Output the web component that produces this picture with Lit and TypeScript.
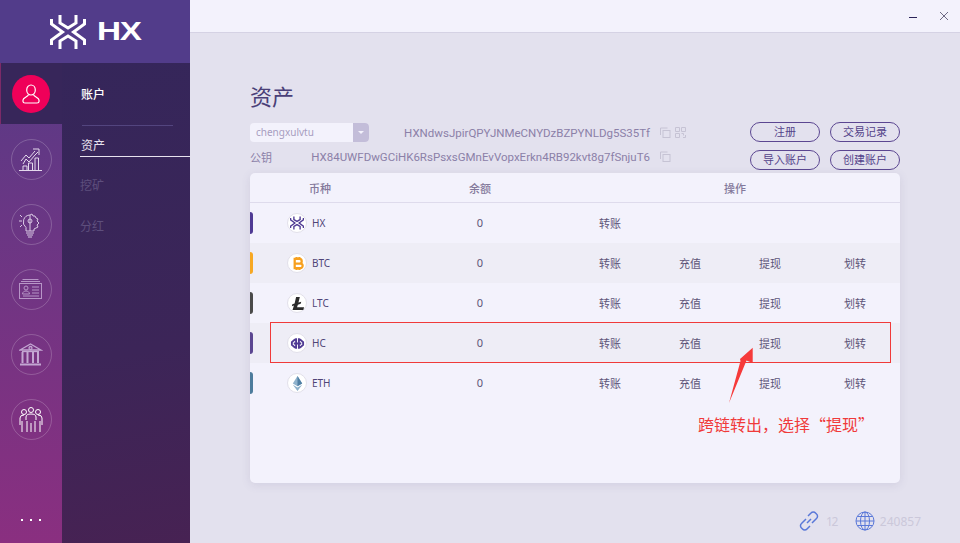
import { LitElement, html, css, svg } from "lit";
import { customElement } from "lit/decorators.js";

const logoMark = (color: string, w: number) => svg`
  <g fill="none" stroke=${color} stroke-width=${w} stroke-linejoin="miter">
    <path d="M10 1v8l8 5 8-5V1"/>
    <path d="M10 35v-8l8-5 8 5v8"/>
    <path d="M1.500 5v5l11 8-11 8v5"/>
    <path d="M34.500 5v5l-11 8 11 8v5"/>
  </g>`;

const coins = [
  { name: "HX", bar: "#4f3a94", all: false },
  { name: "BTC", bar: "#f7a823", all: true },
  { name: "LTC", bar: "#4a4a4a", all: true },
  { name: "HC", bar: "#5b4691", all: true },
  { name: "ETH", bar: "#4d7c9c", all: true },
];

const coinIcon = (name: string) => {
  if (name === "HX")
    return svg`<svg viewBox="0 0 36 36" width="14" height="14">${logoMark("#4f3a94", 3.5)}</svg>`;
  if (name === "BTC")
    return svg`<svg viewBox="0 0 16 16" width="15" height="15"><path fill="none" stroke="#f7a01e" stroke-width="2.400" d="M5 3h5a2.400 2.400 0 0 1 0 5H5h6a2.500 2.500 0 0 1 0 5H5zM7 1v2M10 1v2M7 13v2M10 13v2"/></svg>`;
  if (name === "LTC")
    return svg`<svg viewBox="0 0 16 16" width="15" height="15"><path fill="#2b2b2b" d="M6.500 1h4L9 7l3-1-.6 2.200-3 1L7.500 12H15l-.8 3H2.700l1.500-5L2 10.800l.5-2 2.400-.8z"/></svg>`;
  if (name === "HC")
    return svg`<svg viewBox="0 0 16 16" width="15" height="15"><g fill="none" stroke="#4f3a94" stroke-width="2"><path d="M6 4H5L2 6.500v3L5 12h1M10 4h1l3 2.500v3L11 12h-1M6.500 2.500v11M9.500 2.500v11M4 8h8"/></g></svg>`;
  return svg`<svg viewBox="0 0 16 16" width="15" height="15"><path fill="#8fb2cc" d="M8 0l5 8-5 3-5-3z"/><path fill="#4f7fa3" d="M8 0v11l5-3z"/><path fill="#8fb2cc" d="M3 9.300l5 3 5-3-5 6.700z"/></svg>`;
};

const navIcons = [
  svg`<g fill="none" stroke="#e4d9ec" stroke-width="1"><path d="M2 14l5-6 3 3 6-7"/><path d="M4 17l3-5 3 3 6-7 3-3"/><path d="M14 2h6v6"/><path d="M0 23.500h23M4 23v-4h4v4M9.500 23v-7h4v7M16 23V11h3.500v12"/></g>`,
  svg`<g fill="none" stroke="#d9c9e3" stroke-width="1"><path d="M11 3a7 7 0 0 0-4 12.500V19h8"/><path d="M11 3v16M11 3l2-1 1 2 2 0 1 2 2 1-1 2 2 2-2 2 1 2-2 1-2 1v2"/><circle cx="11" cy="9" r="2"/><path d="M7 21h8M8 23h6M9 25h4M0 9h3M1 3l2 2M1 15l2-2"/></g>`,
  svg`<g fill="none" stroke="#b795c7" stroke-width="1"><rect x="0.500" y="6.500" width="22" height="15"/><path d="M2 4.500h19M3.500 2.500h16"/><circle cx="7" cy="11" r="2"/><path d="M3.500 17c0-4 7-4 7 0zM13 10h7M13 13h7M13 16h7M4 19h16"/></g>`,
  svg`<g fill="none" stroke="#c3a6d2" stroke-width="1.300"><path d="M1 8l10.500-6L22 8z"/><circle cx="11.500" cy="6" r="1.500"/><path d="M3 9.500h17"/><path stroke-width="2" d="M3.500 10v11M8.500 10v11M14 10v11M19 10v11"/><path stroke-width="2" d="M1 22.500h21"/></g>`,
  svg`<g fill="none" stroke="#fff" stroke-width="1"><circle cx="5" cy="5" r="2.500"/><circle cx="12" cy="3" r="2.500"/><circle cx="19" cy="5" r="2.500"/><path d="M1 18V11q0-3 4-3M23 18V11q0-3-4-3M7 13V10q0-3 5-3t5 3v3M8 25V14M16 25V14M12 25V16M3 14v11M21 14v11"/></g>`,
];

@customElement("app-root")
export class AppRoot extends LitElement {
  static styles = css`
    :host {
      display: flex;
      width: 960px;
      height: 543px;
      overflow: hidden;
      position: relative;
      background: #e3e1ee;
      font-family: "Noto Sans", "Noto Sans CJK SC", sans-serif;
      font-size: 11px;
      color: #453b66;
    }
    .side {
      width: 190px;
      flex: none;
      display: flex;
      flex-direction: column;
    }
    .brand {
      height: 63px;
      flex: none;
      background: #523c8a;
      display: flex;
      align-items: center;
      padding-left: 50px;
      gap: 11px;
      box-sizing: border-box;
    }
    .brand-name {
      color: #fff;
      font-family: "Liberation Sans", sans-serif;
      font-weight: 700;
      font-size: 25px;
      width: 44px;
      display: inline-block;
      transform: scaleX(1.33);
      transform-origin: left center;
      white-space: nowrap;
      letter-spacing: -1px;
    }
    .side-body {
      flex: 1;
      display: flex;
    }
    .rail {
      width: 62px;
      flex: none;
      background: linear-gradient(180deg, #5a3a86 0%, #8a2f80 100%);
      display: flex;
      flex-direction: column;
      align-items: center;
      position: relative;
    }
    .rail-active {
      align-self: stretch;
      height: 61px;
      background: #37265a;
      box-shadow: inset 1px 0 0 #7c2a68;
      display: flex;
      align-items: center;
      justify-content: center;
      margin-bottom: 15px;
    }
    .avatar {
      width: 38px;
      height: 38px;
      border-radius: 50%;
      background: #ef0059;
      display: flex;
      align-items: center;
      justify-content: center;
    }
    .nav-circle {
      width: 41px;
      height: 41px;
      border: 1px solid rgba(255, 255, 255, 0.2);
      border-radius: 50%;
      box-sizing: border-box;
      display: flex;
      align-items: center;
      justify-content: center;
      margin-bottom: 24px;
    }
    .more {
      position: absolute;
      bottom: 22px;
      left: 21px;
      display: flex;
      gap: 7px;
    }
    .more i {
      width: 2px;
      height: 2px;
      background: #fff;
    }
    .subnav {
      flex: 1;
      background: linear-gradient(170deg, #35265a 0%, #3c2558 60%, #472253 100%);
      padding-top: 22px;
      box-sizing: border-box;
      padding-left: 18px;
      font-size: 12px;
    }
    .subnav-title {
      color: #fff;
      font-weight: 500;
      line-height: 20px;
      padding-left: 1px;
    }
    .subnav-rule {
      width: 91px;
      height: 1px;
      background: #53457f;
      margin: 20px 0 0 2px;
    }
    .subnav-item {
      color: #5e4f7d;
      line-height: 18px;
      margin-top: 23px;
    }
    .subnav-item.on {
      color: #e7e2ee;
      margin-top: 11px;
      padding: 0 0 1px 1px;
      border-bottom: 1px solid #e7e2ee;
    }
    .subnav-item.on + .subnav-item {
      margin-top: 20px;
    }
    main {
      flex: 1;
      display: flex;
      flex-direction: column;
      min-width: 0;
    }
    .titlebar {
      height: 33px;
      flex: none;
      box-sizing: border-box;
      background: #f3f2fc;
      border-bottom: 1px solid #d5d2e4;
      display: flex;
      justify-content: flex-end;
      align-items: center;
      gap: 21px;
      padding-right: 11px;
    }
    .content {
      flex: 1;
      padding: 48px 60px 0;
      display: flex;
      flex-direction: column;
    }
    h1 {
      margin: 0;
      font-weight: 400;
      font-size: 22px;
      line-height: 30px;
      color: #4a3f78;
    }
    .acct {
      display: flex;
      justify-content: space-between;
      margin-top: 11px;
      height: 50px;
    }
    .acct-left {
      display: flex;
      flex-direction: column;
      gap: 5px;
      padding-top: 1px;
    }
    .acct-line {
      display: flex;
      align-items: center;
      height: 19px;
      color: #8b80a8;
      width: 437px;
    }
    .acct-line .addr {
      flex: 1;
      text-align: right;
      font-family: Roboto, "Noto Sans", sans-serif;
      font-size: 11.5px;
    }
    .pub-label {
      color: #8b80a8;
    }
    .select {
      width: 119px;
      height: 19px;
      display: flex;
      border-radius: 4px;
      background: #f3f2fc;
      overflow: hidden;
      color: #a79dbf;
      line-height: 19px;
      font-size: 10px;
      flex: none;
    }
    .select span {
      flex: 1;
      padding-left: 6px;
    }
    .select b {
      width: 16px;
      background: #c3bdd9;
      display: flex;
      align-items: center;
      justify-content: center;
    }
    .select b::after {
      content: "";
      border: 3px solid transparent;
      border-top-color: #f3f2fc;
      border-bottom: 0;
    }
    .tool-icons {
      display: flex;
      gap: 4px;
      width: 27px;
      margin-left: 10px;
      flex: none;
    }
    .btns {
      display: grid;
      grid-template-columns: 70px 70px;
      gap: 5px 10px;
    }
    .btn {
      height: 20px;
      box-sizing: border-box;
      border: 1px solid #5b4691;
      border-radius: 10px;
      color: #54438a;
      text-align: center;
      line-height: 18px;
    }
    .table {
      margin-top: 1px;
      height: 310px;
      flex: none;
      border-radius: 5px;
      background: #f3f2fc;
      box-shadow: 0 2px 10px rgba(90, 80, 130, 0.12);
      overflow: hidden;
    }
    .row {
      display: grid;
      grid-template-columns: 190px 80px 50px 80px 80px 80px 90px;
      align-items: center;
      height: 40px;
      text-align: center;
      color: #5d5478;
      position: relative;
    }
    .row.alt {
      background: #eeedf6;
    }
    .row.head {
      height: 30px;
      color: #84799b;
      font-weight: 500;
      box-sizing: border-box;
      border-bottom: 1px solid #dedbec;
    }
    .head .c1 {
      text-align: left;
      padding-left: 59px;
    }
    .head .ops {
      grid-column: 4 / 8;
    }
    .balance {
      padding-bottom: 2px;
    }
    .coin {
      display: flex;
      align-items: center;
      gap: 5px;
      padding-left: 37px;
      color: #4f4478;
      font-size: 10px;
      height: 100%;
      position: relative;
    }
    .bar {
      position: absolute;
      left: 0;
      top: 9px;
      width: 3px;
      height: 22px;
      border-radius: 0 3px 3px 0;
    }
    .coin-icon {
      width: 20px;
      height: 20px;
      box-sizing: border-box;
      background: #fff;
      border-radius: 50%;
      border: 1px solid #e2e0ea;
      display: flex;
      align-items: center;
      justify-content: center;
    }
    .status {
      position: absolute;
      right: 39px;
      bottom: 11px;
      display: flex;
      align-items: center;
      color: #cbc8da;
      font-size: 12px;
    }
    .status svg {
      margin-right: 5px;
    }
    .status svg.link {
      margin-right: 6px;
    }
    .status span {
      margin-right: 18px;
      letter-spacing: -1.500px;
    }
    .status span:last-child {
      margin-right: 0;
      letter-spacing: 0;
    }
    .callout {
      position: absolute;
      left: 270px;
      top: 322px;
      width: 621px;
      height: 41px;
      box-sizing: border-box;
      border: 1px solid #f03a3a;
      pointer-events: none;
    }
    .arrow {
      position: absolute;
      left: 725px;
      top: 345px;
    }
    .note {
      position: absolute;
      left: 698px;
      top: 413px;
      font-family: "Noto Sans CJK SC", sans-serif;
      font-size: 16px;
      line-height: 22px;
      color: #f03a3a;
      white-space: nowrap;
    }
  `;

  render() {
    return html`
      <div class="side">
        <div class="brand">
          <svg viewBox="0 0 36 36" width="36" height="36">${logoMark("#fff", 3)}</svg>
          <span class="brand-name">HX</span>
        </div>
        <div class="side-body">
          <div class="rail">
            <div class="rail-active">
              <div class="avatar">
                <svg viewBox="0 0 18 20" width="18" height="20" fill="none" stroke="#fff" stroke-width="1.200">
                  <ellipse cx="9" cy="6" rx="4.300" ry="5"/>
                  <path d="M6.500 10.500c0 2-5.500 3-5.500 5.500v1.500q0 1.500 2 1.500h12q2 0 2-1.500V16c0-2.500-5.500-3.500-5.500-5.500"/>
                </svg>
              </div>
            </div>
            ${navIcons.map(
              (icon) => html`<div class="nav-circle"><svg viewBox="0 0 24 26" width="24" height="26">${icon}</svg></div>`
            )}
            <div class="more"><i></i><i></i><i></i></div>
          </div>
          <div class="subnav">
            <div class="subnav-title">账户</div>
            <div class="subnav-rule"></div>
            <div class="subnav-item on">资产</div>
            <div class="subnav-item">挖矿</div>
            <div class="subnav-item">分红</div>
          </div>
        </div>
      </div>
      <main>
        <div class="titlebar">
          <svg width="10" height="10" viewBox="0 0 10 10"><path d="M1 6.500h8" stroke="#2a2358" stroke-width="1"/></svg>
          <svg width="10" height="10" viewBox="0 0 10 10"><path d="M1 1l8 8M9 1l-8 8" stroke="#6e6a85" stroke-width="1" fill="none"/></svg>
        </div>
        <div class="content">
          <h1>资产</h1>
          <div class="acct">
            <div class="acct-left">
              <div class="acct-line">
                <div class="select"><span>chengxulvtu</span><b></b></div>
                <span class="addr">HXNdwsJpirQPYJNMeCNYDzBZPYNLDg5S35Tf</span>
                <span class="tool-icons">
                  ${this.copyIcon()}
                  <svg width="11" height="11" viewBox="0 0 11 11" fill="none" stroke="#c6c3d4"><path d="M.5.500h4v4h-4zM6.500.500h4v4h-4zM.5 6.500h4v4h-4zM6.500 6.500h2v2M10.500 8v2.500H8"/></svg>
                </span>
              </div>
              <div class="acct-line">
                <span class="pub-label">公钥</span>
                <span class="addr">HX84UWFDwGCiHK6RsPsxsGMnEvVopxErkn4RB92kvt8g7fSnjuT6</span>
                <span class="tool-icons">${this.copyIcon()}</span>
              </div>
            </div>
            <div class="btns">
              <div class="btn">注册</div>
              <div class="btn">交易记录</div>
              <div class="btn">导入账户</div>
              <div class="btn">创建账户</div>
            </div>
          </div>
          <div class="table">
            <div class="row head">
              <div class="c1">币种</div>
              <div>余额</div>
              <div></div>
              <div class="ops">操作</div>
            </div>
            ${coins.map(
              (c, i) => html`
                <div class="row ${i % 2 === 1 ? "alt" : ""}">
                  <div class="coin">
                    <i class="bar" style="background:${c.bar}"></i>
                    <span class="coin-icon">${coinIcon(c.name)}</span>
                    <span>${c.name}</span>
                  </div>
                  <div class="balance">0</div>
                  <div></div>
                  <div>转账</div>
                  ${c.all
                    ? html`<div>充值</div><div>提现</div><div>划转</div>`
                    : html`<div></div><div></div><div></div>`}
                </div>
              `
            )}
          </div>
        </div>
      </main>
      <div class="status">
        <svg class="link" width="22" height="22" viewBox="0 0 22 22" fill="none" stroke="#5a78d8" stroke-width="1.500">
          <path d="M9 13l4-4M8 9l-4.500 4.500a3 3 0 0 0 0 4.500l1 1a3 3 0 0 0 4.500 0L12 16M10 6l3-3a3 3 0 0 1 4.500 0l1 1a3 3 0 0 1 0 4.500L14 13"/>
        </svg>
        <span>12</span>
        <svg width="20" height="20" viewBox="0 0 20 20" fill="none" stroke="#5a78d8" stroke-width="1">
          <circle cx="10" cy="10" r="9"/>
          <ellipse cx="10" cy="10" rx="4.500" ry="9"/>
          <path d="M10 1v18M1 10h18M2.500 5.500h15M2.500 14.500h15"/>
        </svg>
        <span>240857</span>
      </div>
      <div class="callout"></div>
      <svg class="arrow" width="30" height="60" viewBox="0 0 30 60"><path fill="#f63a3a" d="M27.700 2.700L27.700 18 21.500 15.500 4 58 15.500 16 15 14z"/></svg>
      <div class="note">跨链转出，选择“提现”</div>
    `;
  }

  copyIcon() {
    return html`<svg width="11" height="11" viewBox="0 0 11 11" fill="none" stroke="#c6c3d4"><path d="M7.500 1H.5v7"/><rect x="3" y="3.500" width="7" height="7"/></svg>`;
  }
}
